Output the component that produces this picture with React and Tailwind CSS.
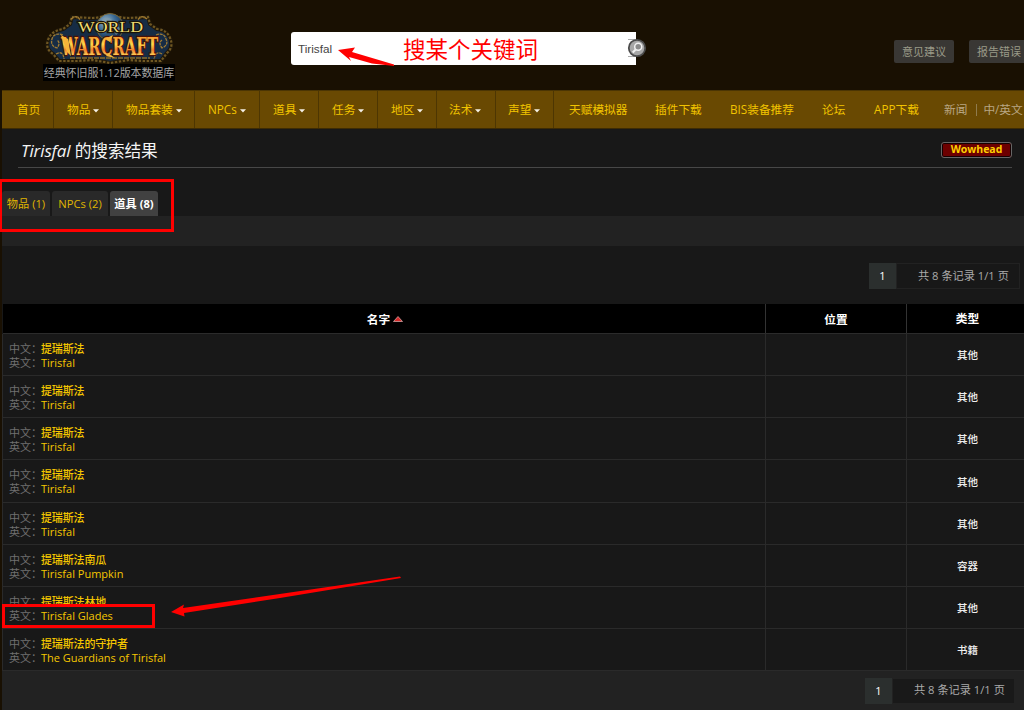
const FONT = "font-['Open_Sans','Noto_Sans_CJK_SC',sans-serif]";

function Caret() {
  return (
    <svg width="6" height="4" viewBox="0 0 6 4" className="ml-[3px] mt-px shrink-0">
      <path d="M0 .3H6L3 3.6Z" fill="#f5f0e6" />
    </svg>
  );
}

const NAV = [
  { t: '首页', w: 'w-[52px]', p: 'pl-[15px]', b: true },
  { t: '物品', w: 'w-[59px]', p: 'pl-[13px]', c: true, b: true },
  { t: '物品套装', w: 'w-[82px]', p: 'pl-[13px]', c: true, b: true },
  { t: 'NPCs', w: 'w-[65px]', p: 'pl-[13px]', c: true, b: true },
  { t: '道具', w: 'w-[59px]', p: 'pl-[13px]', c: true, b: true },
  { t: '任务', w: 'w-[59px]', p: 'pl-[13px]', c: true, b: true },
  { t: '地区', w: 'w-[59px]', p: 'pl-[13px]', c: true, b: true },
  { t: '法术', w: 'w-[59px]', p: 'pl-[12px]', c: true, b: true },
  { t: '声望', w: 'w-[58px]', p: 'pl-[12px]', c: true, b: true },
  { t: '天赋模拟器', w: 'w-[87px]', p: 'pl-[15px]' },
  { t: '插件下载', w: 'w-[75px]', p: 'pl-[14px]' },
  { t: 'BIS装备推荐', w: 'w-[92px]', p: 'pl-[14px]' },
  { t: '论坛', w: 'w-[51px]', p: 'pl-[14px]' },
  { t: 'APP下载', w: 'w-[71px]', p: 'pl-[15px]' },
];

const ROWS = [
  ['提瑞斯法', 'Tirisfal', '其他'],
  ['提瑞斯法', 'Tirisfal', '其他'],
  ['提瑞斯法', 'Tirisfal', '其他'],
  ['提瑞斯法', 'Tirisfal', '其他'],
  ['提瑞斯法', 'Tirisfal', '其他'],
  ['提瑞斯法南瓜', 'Tirisfal Pumpkin', '容器'],
  ['提瑞斯法林地', 'Tirisfal Glades', '其他'],
  ['提瑞斯法的守护者', 'The Guardians of Tirisfal', '书籍'],
];

function Logo() {
  const frame = 'M29 5L48 6Q58 6 67 2Q77 6 86 6L105 5L107 12L114 17Q124 18 127 26Q131 35 124 41L118 49H100L86 48L67 51L50 48L34 49H16L10 42Q2 37 5 28Q8 19 20 17L27 12Z';
  return (
    <svg width="132" height="52" viewBox="0 0 132 52" className="block">
      <defs>
        <linearGradient id="gold" x1="0" y1="0" x2="0" y2="1">
          <stop offset=".1" stopColor="#f58a2c" />
          <stop offset=".42" stopColor="#ffd84a" />
          <stop offset=".62" stopColor="#f0822e" />
          <stop offset=".85" stopColor="#ffe060" />
        </linearGradient>
        <radialGradient id="globe" cx=".35" cy=".3" r=".7">
          <stop offset="0" stopColor="#9db7c6" />
          <stop offset=".5" stopColor="#3a6a94" />
          <stop offset="1" stopColor="#10294a" />
        </radialGradient>
      </defs>
      <path d={frame} fill="#162c45" stroke="#1e1608" strokeWidth="4" />
      <path d={frame} fill="none" stroke="#6f5722" strokeWidth="2.2" strokeDasharray="2.4 1.6" />
      <path d="M20 23Q11 20 9 27Q7 34 14 36Q18 31 14 28M113 23Q121 20 123 27Q126 33 119 36Q115 31 119 28M28 7Q34 2 37 8M104 7Q98 2 95 8M13 42Q20 38 21 47M119 42Q113 38 111 47" fill="none" stroke="#a07b32" strokeWidth="1.3" strokeDasharray="3 .8" />
      <circle cx="67" cy="15" r="13.5" fill="url(#globe)" stroke="#7b652f" />
      <path d="M58 9Q64 3 69 8L66 13L60 12M68 13Q76 13 78 18L73 23" fill="#7f9ba9" opacity=".7" />
      <path d="M27 46H107" stroke="#8c6b28" strokeWidth="1.4" strokeDasharray="5 1" />
      <text x="35" y="20" textLength="65" lengthAdjust="spacingAndGlyphs" fontFamily="Liberation Serif, serif" fontSize="15.5" stroke="#1a1408" strokeWidth="2.4" paintOrder="stroke" fill="#f0dc72">WORLD</text>
      <text x="18" y="43" textLength="97" lengthAdjust="spacingAndGlyphs" fontFamily="DejaVu Serif, serif" fontWeight="700" fontSize="25" stroke="#4a1206" strokeWidth="2.6" paintOrder="stroke" fill="url(#gold)">WARCRAFT</text>
      <path d="M18 23L25 27L28 44L24 40ZM62 27L70 23L67 30M65 41L72 46L63 44" fill="#f5b53a" />
    </svg>
  );
}

function Label({ children }) {
  return <span className="w-8 shrink-0 whitespace-nowrap text-[#6f6f6f]">{children}</span>;
}

export default function App() {
  return (
    <div className={'relative h-[710px] w-[1024px] overflow-hidden bg-[#181818] text-[12px] ' + FONT}>
      <header className="flex h-[90px] bg-[#191002]">
        <div className="flex w-[291px] flex-col pl-[43px] pt-3">
          <Logo />
          <div className="flex h-[17px] w-[132px] items-center justify-center whitespace-nowrap bg-black pt-px text-[11px] tracking-[-0.1px] text-[#a5a5a5]">
            经典怀旧服1.12版本数据库
          </div>
        </div>
        <div className="mt-8 flex h-[33px] w-[345px] items-center rounded-l-[3px] bg-white pl-[7px] font-['Liberation_Sans',sans-serif] text-[11.7px] text-[#444]">
          Tirisfal
        </div>
        <svg width="20" height="20" viewBox="0 0 20 20" className="-ml-[9px] mt-[38px]">
          <path d="M1 1.500H9M1 18.500H9" stroke="#aaa" />
          <circle cx="10" cy="10" r="8.2" fill="#a7a7a7" stroke="#4c4c4c" strokeWidth="1.8" />
          <circle cx="11.2" cy="8.700" r="3.500" fill="#8b8b8b" stroke="#f0f0f0" strokeWidth="1.5" />
          <path d="M8.700 11.500L5.700 14.500" stroke="#f0f0f0" strokeWidth="2" />
        </svg>
        <div className="ml-auto mt-[40px] flex h-[23px] w-[130px] shrink-0 gap-[15px] whitespace-nowrap text-[11px] text-[#9a9a88]">
          <div className="flex w-[60px] shrink-0 items-center justify-center rounded-[2px] bg-[#393734] pt-px">意见建议</div>
          <div className="flex w-[60px] shrink-0 items-center justify-center rounded-[2px] bg-[#393734] pt-px">报告错误</div>
        </div>
      </header>

      <div className="h-[620px] border-l-2 border-[#191002]">
        <nav className="flex h-[39px] border-y border-t-[#4b3503] border-b-[#3d2b04] bg-[#694902] text-[11.7px] text-[#f2c400]">
          {NAV.map((n) => (
            <div key={n.t} className={'flex shrink-0 items-center whitespace-nowrap pt-px ' + n.w + ' ' + n.p + (n.b ? ' border-r border-[#4d3602]' : '')}>
              {n.t}
              {n.c && <Caret />}
            </div>
          ))}
          <div className="flex items-center whitespace-nowrap pl-[14px] pt-px text-[#b8a684]">
            新闻
            <span className="ml-[9px] mr-[6px] h-3 w-px bg-[#8f7b4e]" />
            中/英文
          </div>
        </nav>

        <div className="ml-4 mr-[12px] flex h-[39px] items-center justify-between border-b border-[#474747]">
          <h1 className="whitespace-nowrap pl-[3px] pt-[5px] text-[16.7px] tracking-[-0.1px] text-[#f4f4f4]">
            <em className="text-[17px] font-medium">Tirisfal</em> 的搜索结果
          </h1>
          <div className="mt-[4px] flex h-[16px] w-[71px] items-center justify-center rounded-[3px] border border-[#666] bg-[#6d0000] pb-px text-[10.5px] font-bold text-[#ffd000] shadow-[inset_0_0_0_1px_#170000]">
            Wowhead
          </div>
        </div>

        <div className="flex h-[48px] items-end gap-[2px] whitespace-nowrap text-[11.2px] text-[#e0b600]">
          <div className="flex h-[25px] w-[48px] items-center justify-center rounded-t-[3px] bg-[#292929] pt-[2px]">物品 (1)</div>
          <div className="flex h-[25px] w-[56px] items-center justify-center rounded-t-[3px] bg-[#292929] pt-[2px]">NPCs (2)</div>
          <div className="flex h-[25px] w-[48px] items-center justify-center rounded-t-[3px] bg-[#414141] pt-[2px] font-bold text-white">道具 (8)</div>
        </div>
        <div className="h-[30px] bg-[#222]" />

        <div className="flex h-[58px] items-start justify-end pr-1 pt-[17px] text-[#aaa]">
          <div className="flex h-[26px] w-[27px] items-center justify-center bg-[#2b2f2e] text-[11px] text-white">1</div>
          <div className="flex h-[26px] w-[124px] items-center whitespace-nowrap border border-[#222] pl-[21px] text-[11.2px]">共 8 条记录 1/1 页</div>
        </div>

        <div className="ml-px flex h-[29.75px] border-b border-[#2b2b2b] bg-black pt-px text-[11.7px] font-bold text-white">
          <div className="-mt-px flex w-[763px] items-center justify-center border-r border-[#333] pl-[2px] pt-[2px]">
            名字
            <svg width="10" height="6" viewBox="0 0 10 6" className="ml-[3px]">
              <path d="M5 .5L9.5 5.500H.5Z" fill="#d52a2a" stroke="#e2b4b4" strokeWidth=".7" />
            </svg>
          </div>
          <div className="-mt-px flex w-[141px] items-center justify-center border-r border-[#333] pt-[2px]">位置</div>
          <div className="flex flex-1 items-center justify-center pl-[4px]">类型</div>
        </div>
        {ROWS.map((r, i) => (
          <div key={i} className="flex h-[42.2px] border-b border-l border-[#2a2a2a]">
            <div className="flex w-[763px] flex-col justify-center border-r border-[#2a2a2a] pl-[6px] pt-[3px] text-[11px] leading-[14px] text-[#f5c700]">
              <div className="flex"><Label>中文：</Label><span className="font-medium tracking-[-0.15px]">{r[0]}</span></div>
              <div className="flex"><Label>英文：</Label><span className="font-medium">{r[1]}</span></div>
            </div>
            <div className="w-[141px] border-r border-[#2a2a2a]" />
            <div className="flex flex-1 items-center justify-center pl-[4px] pt-[3px] text-[10.5px] font-medium text-[#eee]">{r[2]}</div>
          </div>
        ))}
        <div className="flex h-[39px] items-start justify-end bg-[#222] pr-[9px] pt-[6.6px] text-[#aaa]">
          <div className="flex h-[26px] w-[27px] items-center justify-center bg-[#2b2f2e] text-[11px] text-white">1</div>
          <div className="flex h-[26px] w-[123px] items-center whitespace-nowrap border border-[#222] bg-[#191919] pl-[21px] text-[11.2px]">共 8 条记录 1/1 页</div>
        </div>
      </div>

      <div className="absolute left-[403px] top-[34px] whitespace-nowrap text-[22.5px] leading-8 text-[#ff0000]">搜某个关键词</div>
      <div className="absolute -left-[1px] top-[179px] h-[53px] w-[175px] border-[3px] border-[#ff0000]" />
      <div className="absolute left-[2px] top-[604px] h-[24px] w-[153px] border-[3px] border-[#ff0000]" />
      <svg width="1024" height="710" viewBox="0 0 1024 710" className="pointer-events-none absolute left-0 top-0">
        <path d="M338 50L355 47.500L352 52L394 64.500V66L372 63.500L349 57L351 61Z" fill="#f00" />
        <path d="M171 612L184 604.500L183 608L400 576.500L401 578L280 598L184 613L184.500 616.500Z" fill="#f00" />
      </svg>
    </div>
  );
}
